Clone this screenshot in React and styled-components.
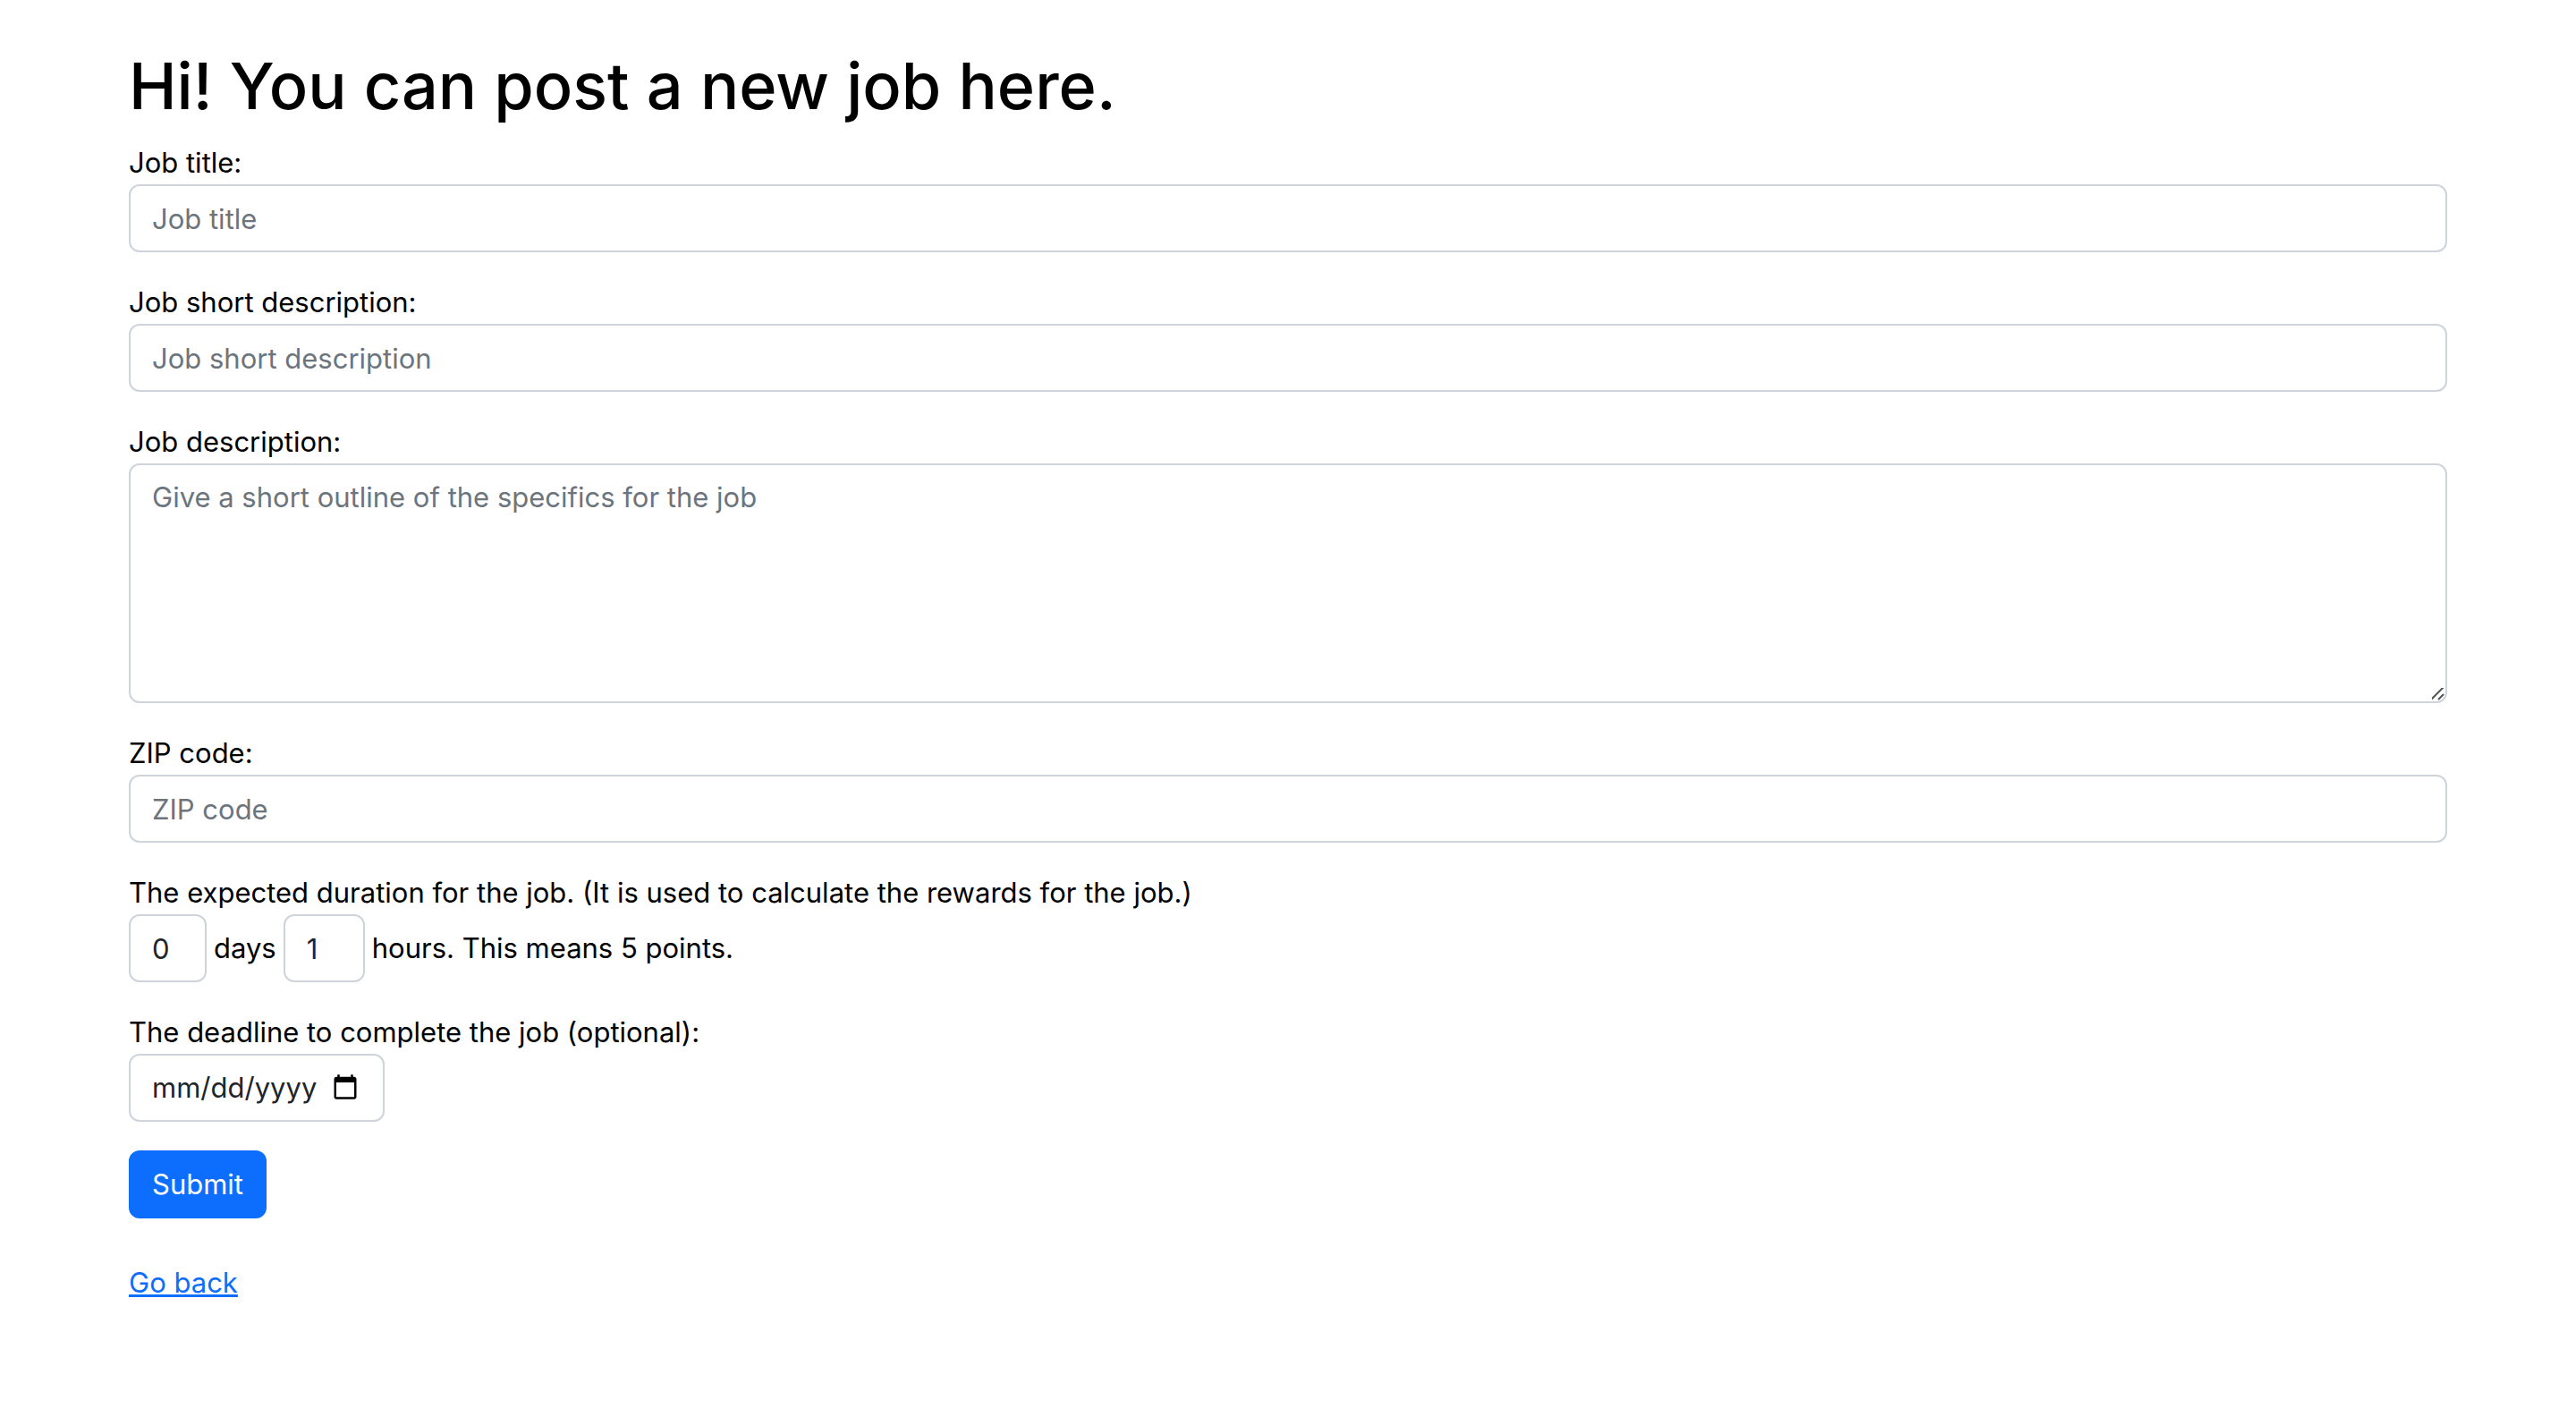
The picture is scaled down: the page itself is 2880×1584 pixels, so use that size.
import React, { useState } from "react";
import styled, { createGlobalStyle, css } from "styled-components";

const GlobalStyle = createGlobalStyle`
  *, *::before, *::after { box-sizing: border-box; }
  body {
    margin: 0;
    background: #fff;
    color: #000;
    font-family: Inter, "Liberation Sans", sans-serif;
    font-size: 31px;
    line-height: 48px;
  }
`;

const Page = styled.main`
  padding: 48px 5%;
`;

const Title = styled.h1`
  margin: 0 0 14px;
  font-size: 72px;
  font-weight: 500;
  line-height: 96px;
`;

const Form = styled.form`
  display: flex;
  flex-direction: column;
  align-items: flex-start;
  gap: 32px;
  margin-bottom: 48px;
`;

const Field = styled.div`
  width: 100%;
`;

const Label = styled.label`
  display: block;
`;

const controlStyle = css`
  display: block;
  margin: 0;
  padding: 12px 24px;
  border: 2px solid #ced4da;
  border-radius: 12px;
  background: #fff;
  color: #212529;
  font: inherit;

  &::placeholder {
    color: #6c757d;
    opacity: 1;
  }

  &:focus {
    border-color: #86b7fe;
    outline: 0;
    box-shadow: 0 0 0 8px rgba(13, 110, 253, 0.25);
  }
`;

const Input = styled.input`
  ${controlStyle}
  width: 100%;
  height: 76px;
`;

const resizeGrip = encodeURIComponent(
  '<svg xmlns="http://www.w3.org/2000/svg" width="20" height="20"><path d="M4 18 18 4M12 18 18 12" stroke="#555" stroke-width="2" fill="none"/></svg>'
);

const TextArea = styled.textarea`
  ${controlStyle}
  width: 100%;
  height: 268px;
  resize: vertical;

  &::-webkit-scrollbar {
    width: 20px;
    height: 20px;
  }

  &::-webkit-resizer {
    background: url("data:image/svg+xml,${resizeGrip}") right bottom no-repeat;
  }
`;

const NumberInput = styled(Input)`
  width: ${({ $width }) => $width}px;
  appearance: textfield;

  &::-webkit-inner-spin-button {
    display: none;
  }
`;

const DateInput = styled(Input)`
  width: 286px;

  &::-webkit-datetime-edit-month-field,
  &::-webkit-datetime-edit-day-field,
  &::-webkit-datetime-edit-year-field {
    padding: 0;
  }

  &::-webkit-calendar-picker-indicator {
    width: 32px;
    height: 32px;
    margin-right: 2px;
    padding: 0;
  }
`;

const Duration = styled.div`
  display: flex;
  align-items: center;
  gap: 8px;
`;

const Button = styled.button`
  height: 76px;
  padding: 12px 24px;
  border: 2px solid #0d6efd;
  border-radius: 12px;
  background: #0d6efd;
  color: #fff;
  font: inherit;
  cursor: pointer;
`;

const Link = styled.a`
  color: #0d6efd;
  text-decoration: underline;
`;

export default function App() {
  const [days, setDays] = useState(0);
  const [hours, setHours] = useState(1);
  const points = (Number(days) * 24 + Number(hours)) * 5;

  return (
    <>
      <GlobalStyle />
      <Page>
        <Title>Hi! You can post a new job here.</Title>
        <Form onSubmit={(event) => event.preventDefault()}>
          <Field>
            <Label htmlFor="title">Job title:</Label>
            <Input id="title" type="text" placeholder="Job title" />
          </Field>
          <Field>
            <Label htmlFor="short">Job short description:</Label>
            <Input id="short" type="text" placeholder="Job short description" />
          </Field>
          <Field>
            <Label htmlFor="description">Job description:</Label>
            <TextArea
              id="description"
              placeholder="Give a short outline of the specifics for the job"
            />
          </Field>
          <Field>
            <Label htmlFor="zip">ZIP code:</Label>
            <Input id="zip" type="text" placeholder="ZIP code" />
          </Field>
          <Field role="group" aria-labelledby="duration">
            <div id="duration">
              The expected duration for the job. (It is used to calculate the rewards for the job.)
            </div>
            <Duration>
              <NumberInput
                id="days"
                type="number"
                min="0"
                $width={87}
                value={days}
                onChange={(event) => setDays(event.target.value)}
              />
              <Label htmlFor="days">days</Label>
              <NumberInput
                id="hours"
                type="number"
                min="0"
                $width={91}
                value={hours}
                onChange={(event) => setHours(event.target.value)}
              />
              <Label htmlFor="hours">hours. This means {points} points.</Label>
            </Duration>
          </Field>
          <Field>
            <Label htmlFor="deadline">The deadline to complete the job (optional):</Label>
            <DateInput id="deadline" type="date" />
          </Field>
          <Button type="submit">Submit</Button>
        </Form>
        <Link href="#back">Go back</Link>
      </Page>
    </>
  );
}
